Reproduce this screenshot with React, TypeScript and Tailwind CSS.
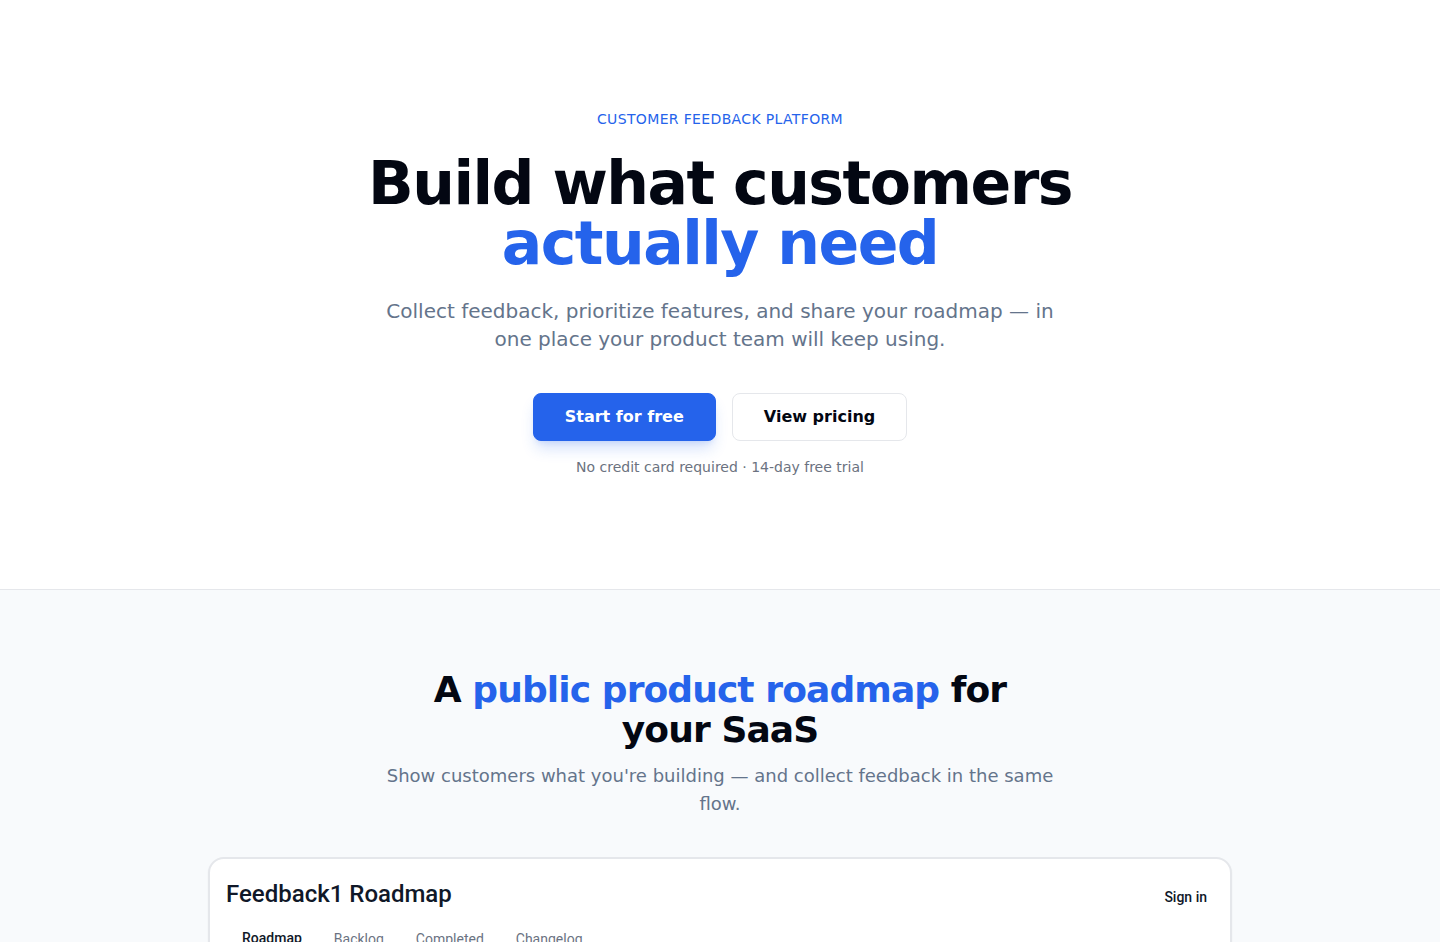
import React from 'react';

const tabs = ['Roadmap', 'Backlog', 'Completed', 'Changelog'];

export default function App() {
  return (
    <div className="min-h-screen bg-white font-['DejaVu_Sans',sans-serif]">
      {/* Hero */}
      <section className="pt-[109px] pb-28 px-6 text-center border-b border-gray-200">
        <p className="text-sm leading-5 tracking-wide text-[#2563eb] uppercase">Customer feedback platform</p>
        <h1 className="mt-6 text-6xl leading-none font-bold tracking-tight text-gray-950">
          Build what customers
          <br />
          <span className="text-[#2563eb]">actually need</span>
        </h1>
        <p className="mt-6 mx-auto max-w-2xl text-xl leading-7 text-[#64748b]">
          Collect feedback, prioritize features, and share your roadmap — in one place your product team will keep using.
        </p>
        <div className="mt-10 flex justify-center gap-4">
          <button className="px-[31px] py-[11px] rounded-lg bg-[#2563eb] border border-[#2563eb] text-white font-bold text-base leading-6 shadow-lg shadow-[#2563eb]/20">
            Start for free
          </button>
          <button className="px-[31px] py-[11px] rounded-lg bg-white border border-gray-200 text-gray-950 font-bold text-base leading-6">
            View pricing
          </button>
        </div>
        <p className="mt-4 text-sm leading-5 text-[#6b7280]">No credit card required · 14-day free trial</p>
      </section>

      {/* Roadmap preview */}
      <section className="bg-[#f8fafc] pt-20 pb-20 px-6">
        <div className="mx-auto max-w-2xl text-center">
          <h2 className="text-4xl leading-10 font-bold tracking-tight text-gray-950">
            A <span className="text-[#2563eb]">public product roadmap</span> for your SaaS
          </h2>
          <p className="mt-3 text-lg leading-7 text-[#64748b]">
            Show customers what you're building — and collect feedback in the same flow.
          </p>
        </div>

        <div className="mt-[39px] mx-auto max-w-5xl rounded-2xl border-2 border-gray-200 bg-white font-['Roboto',sans-serif] shadow-xs">
          <div className="flex items-center justify-between pl-4 pr-[15px] pt-[18px]">
            <h3 className="text-2xl leading-8 font-medium text-gray-900">Feedback1 Roadmap</h3>
            <button className="px-2 py-1 text-sm font-medium text-gray-900 mt-[6px]">Sign in</button>
          </div>
          <nav className="flex px-4 mt-[9px]">
            {tabs.map((t, i) => (
              <button
                key={t}
                className={`px-4 py-2 text-sm ${i === 0 ? 'text-gray-900 font-medium border-b-2 border-gray-900' : 'text-gray-500'}`}
              >
                {t}
              </button>
            ))}
          </nav>
          <div className="h-64" />
        </div>
      </section>
    </div>
  );
}
